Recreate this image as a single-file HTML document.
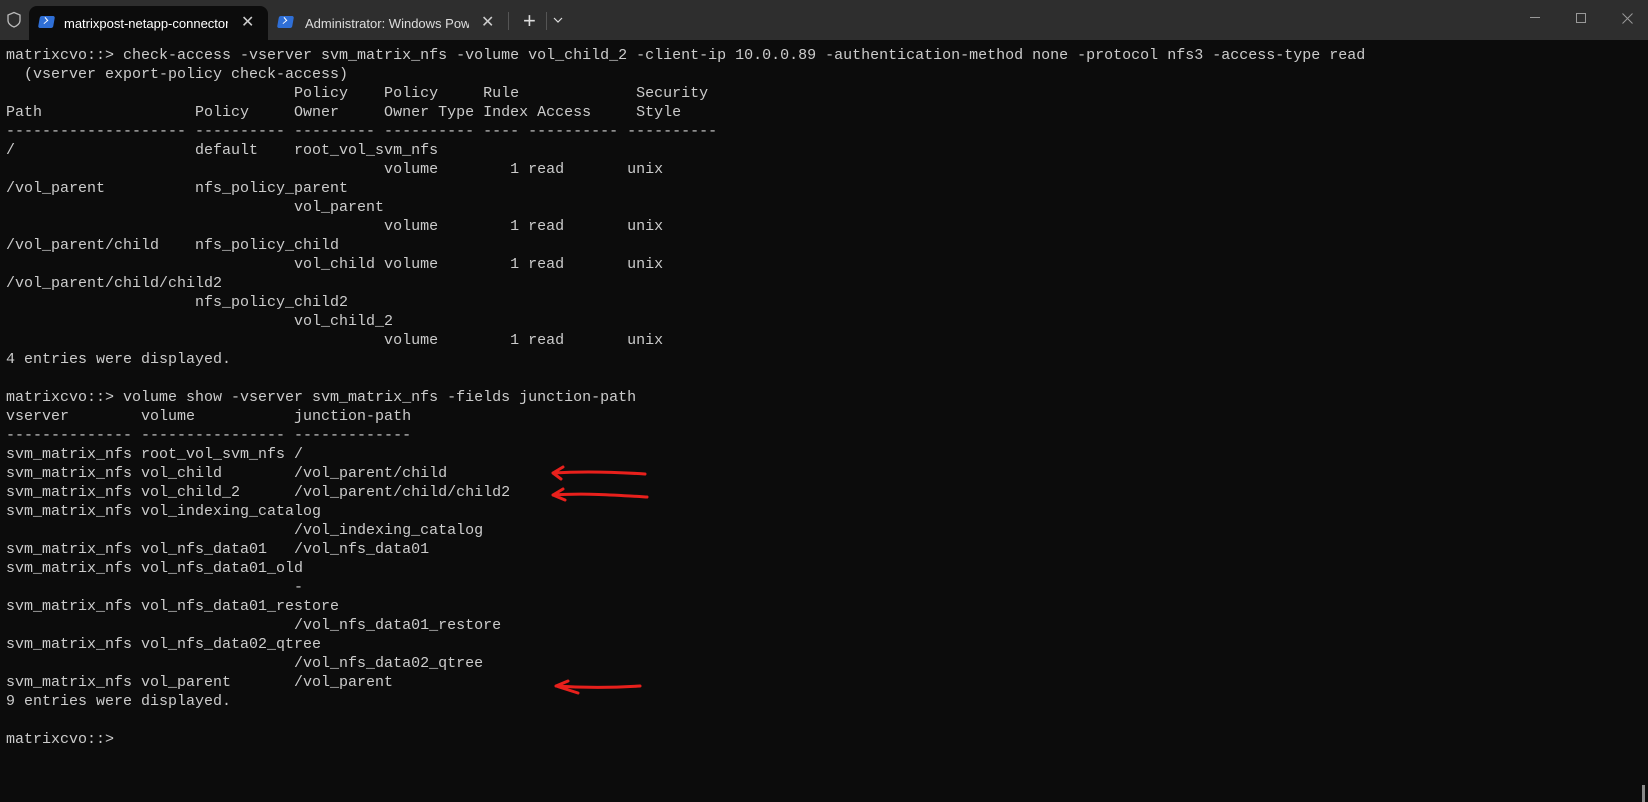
<!DOCTYPE html>
<html><head><meta charset="utf-8"><style>
html,body{margin:0;padding:0;width:1648px;height:802px;overflow:hidden;background:#0c0c0c}
.bar{position:absolute;left:0;top:0;width:1648px;height:40px;background:#2e2e2e}
.tab{position:absolute;top:6px;height:34px;border-radius:8px 8px 0 0;font:13px "Liberation Sans",sans-serif;color:#fff}
.t1{left:29px;width:239px;background:#0c0c0c}
.t2{left:270px;width:232px;color:#ddd}
.ps{position:absolute;left:10px;top:10px;width:15px;height:12px;background:#2f6fd6;border-radius:2px;transform:skewX(-10deg)}
.ps:after{content:"";position:absolute;left:3px;top:2px;width:4px;height:4px;border-right:1.5px solid #fff;border-bottom:1.5px solid #fff;transform:rotate(-45deg)}
.lbl{position:absolute;left:35px;top:10px;white-space:nowrap;overflow:hidden;width:164px}
.x{position:absolute;top:6px;font-size:16px;color:#ccc}
pre{position:absolute;left:6px;top:46px;margin:0;font:15px/19px "Liberation Mono",monospace;color:#cccccc}
</style></head><body>
<div class="bar">
<svg style="position:absolute;left:6px;top:11px" width="16" height="18"><path d="M8 1.5 L14 4 V9.5 C14 12.5 11 15 8 16 C5 15 2 12.5 2 9.5 V4 Z" fill="none" stroke="#bbb" stroke-width="1.3"/></svg>
<div class="tab t1"><div class="ps" style="left:10px"></div><div class="lbl">matrixpost-netapp-connector</div><div class="x" style="left:212px">✕</div></div>
<div class="tab t2"><div class="ps" style="left:8px"></div><div class="lbl">Administrator: Windows PowerShell</div><div class="x" style="left:211px">✕</div></div>
<div style="position:absolute;left:508px;top:12px;width:1px;height:18px;background:#555"></div>
<div style="position:absolute;left:523px;top:8px;color:#ddd;font:22px 'Liberation Sans',sans-serif">+</div>
<div style="position:absolute;left:546px;top:12px;width:1px;height:18px;background:#555"></div>
<svg style="position:absolute;left:553px;top:17px" width="10" height="7"><path d="M1 1 L5 5 L9 1" fill="none" stroke="#ddd" stroke-width="1.2"/></svg>
<div style="position:absolute;left:1530px;top:17px;width:10px;height:1px;background:#999"></div>
<div style="position:absolute;left:1576px;top:13px;width:8px;height:8px;border:1px solid #999"></div>
<svg style="position:absolute;left:1622px;top:13px" width="11" height="11"><path d="M0.5 0.5 L10.5 10.5 M10.5 0.5 L0.5 10.5" stroke="#999" stroke-width="1"/></svg>
</div>
<pre>matrixcvo::&gt; check-access -vserver svm_matrix_nfs -volume vol_child_2 -client-ip 10.0.0.89 -authentication-method none -protocol nfs3 -access-type read
  (vserver export-policy check-access)
                                Policy    Policy     Rule             Security
Path                 Policy     Owner     Owner Type Index Access     Style
-------------------- ---------- --------- ---------- ---- ---------- ----------
/                    default    root_vol_svm_nfs
                                          volume        1 read       unix
/vol_parent          nfs_policy_parent
                                vol_parent
                                          volume        1 read       unix
/vol_parent/child    nfs_policy_child
                                vol_child volume        1 read       unix
/vol_parent/child/child2
                     nfs_policy_child2
                                vol_child_2
                                          volume        1 read       unix
4 entries were displayed.

matrixcvo::&gt; volume show -vserver svm_matrix_nfs -fields junction-path
vserver        volume           junction-path
-------------- ---------------- -------------
svm_matrix_nfs root_vol_svm_nfs /
svm_matrix_nfs vol_child        /vol_parent/child
svm_matrix_nfs vol_child_2      /vol_parent/child/child2
svm_matrix_nfs vol_indexing_catalog
                                /vol_indexing_catalog
svm_matrix_nfs vol_nfs_data01   /vol_nfs_data01
svm_matrix_nfs vol_nfs_data01_old
                                -
svm_matrix_nfs vol_nfs_data01_restore
                                /vol_nfs_data01_restore
svm_matrix_nfs vol_nfs_data02_qtree
                                /vol_nfs_data02_qtree
svm_matrix_nfs vol_parent       /vol_parent
9 entries were displayed.

matrixcvo::&gt;</pre>
<svg style="position:absolute;left:0;top:0" width="1648" height="802">
<g fill="none" stroke="#e8201c" stroke-width="3" stroke-linecap="round" stroke-linejoin="round">
<path d="M645 474 C615 472 585 471 553 473 M563 467 L553 473 L561 479"/>
<path d="M647 497 C615 495 585 493 553 495 M563 489 L553 495 L565 500"/>
<path d="M640 686 C610 688 585 688 556 686 M568 681 L556 686 L578 693"/>
</g>
<rect x="1642" y="785" width="3" height="17" fill="#888"/>
</svg>
</body></html>
